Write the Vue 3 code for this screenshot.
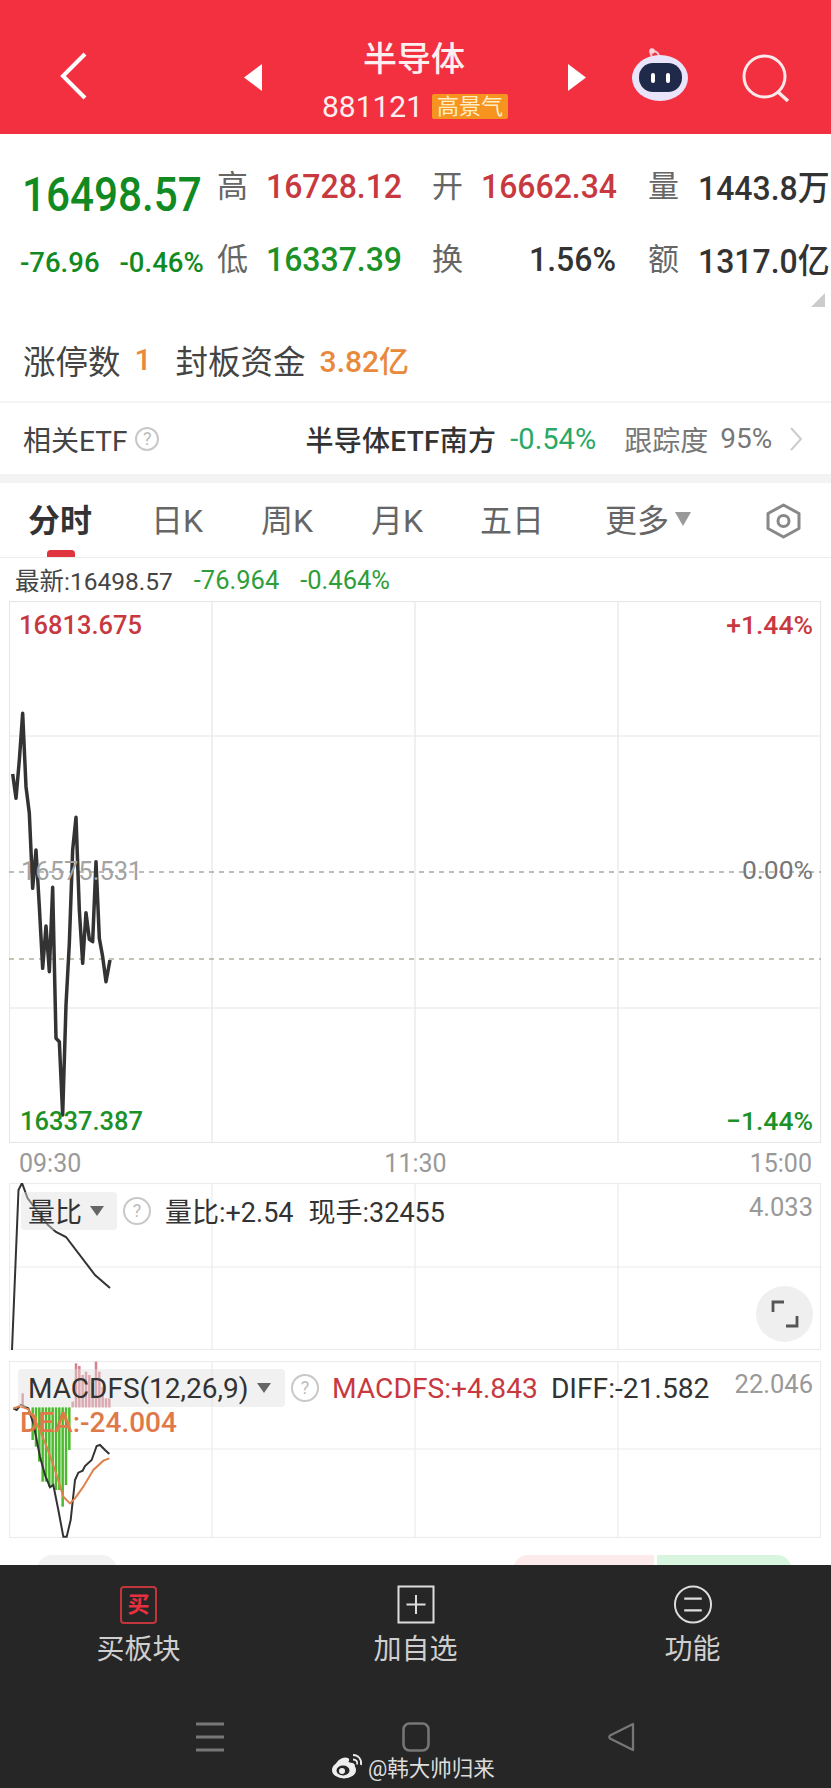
<script setup>
const tabs = [
  { label: '分时', active: true },
  { label: '日K' },
  { label: '周K' },
  { label: '月K' },
  { label: '五日' },
]
const mainLine = [[38,282],[48,355],[58,240],[68,100],[78,320],[88,400],[98,625],[108,510],[118,680],[128,865],[138,738],[148,875],[158,622],[168,1075],[178,1085],[188,1305],[198,975],[208,790],[218,510],[228,412],[238,690],[248,850],[258,698],[268,778],[278,785],[288,545],[298,775],[308,830],[318,905],[330,840]]
  .map(([x, y]) => `${x / 3},${680 + y / 3}`).join(' ')
const z5 = (pts) => pts.map(([x, y]) => `${x / 3},${1350 + y / 3}`).join(' ')
const diff = z5([[40,175],[50,180],[62,165],[85,175],[100,220],[120,320],[135,375],[150,412],[160,405],[175,480],[190,560],[200,560],[212,510],[225,390],[235,368],[248,362],[255,348],[275,330],[290,288],[300,285],[315,300],[328,312]])
const dea = z5([[40,175],[60,168],[85,178],[110,220],[140,290],[165,360],[190,440],[210,460],[225,445],[250,410],[280,360],[310,332],[328,325]])
const greens = [[98,270],[108,290],[118,335],[128,395],[138,395],[148,410],[158,410],[168,420],[178,420],[188,470],[198,405],[208,300]]
  .map(([x, y]) => ({ x: x / 3, y1: 1350 + 172 / 3, y2: 1350 + y / 3 }))
const reds = [[68,130],[218,155],[228,40],[238,48],[248,75],[258,65],[268,75],[278,100],[288,35],[298,65],[308,110],[318,145],[328,145]]
  .map(([x, y]) => ({ x: x / 3, y1: 1350 + 172 / 3, y2: 1350 + y / 3 }))
</script>

<template>
  <div class="app">
    <header class="top">
      <svg class="back" width="27" height="48" viewBox="0 0 27 48"><path d="M25 2 3 24l22 22" fill="none" stroke="#fff" stroke-width="4"/></svg>
      <svg class="tri tri-left" width="18" height="27" viewBox="0 0 18 27"><path d="M18 0v27L0 13.500z" fill="#fff"/></svg>
      <div class="title">
        <div class="name">半导体</div>
        <div class="code"><span>881121</span><span class="tag">高景气</span></div>
      </div>
      <svg class="tri" width="18" height="27" viewBox="0 0 18 27"><path d="M0 0v27l18-13.500z" fill="#fff"/></svg>
      <svg class="robot" width="58" height="54" viewBox="632 50 58 54">
        <path d="M652 58c-2-2-2-5 0-5s6 0 7 5" fill="none" stroke="#f7c4d0" stroke-width="2"/>
        <circle cx="652" cy="53" r="2.800" fill="#fbd5dd"/>
        <ellipse cx="660" cy="80" rx="28" ry="23" fill="#e9e4fa"/>
        <rect x="639" y="65" width="43" height="29" rx="14" fill="#1f2a4a"/>
        <rect x="651" y="75" width="4" height="10" rx="2" fill="#fff"/>
        <rect x="666" y="75" width="4" height="10" rx="2" fill="#fff"/>
      </svg>
      <svg class="search" width="50" height="50" viewBox="742 54 50 50">
        <circle cx="764.500" cy="76.500" r="20.500" fill="none" stroke="#fde8ea" stroke-width="3"/>
        <path d="M778 92l10 9" stroke="#fde8ea" stroke-width="3.500" fill="none"/>
      </svg>
    </header>

    <section class="quote">
      <div class="big green-deep">16498.57</div>
      <div class="lab">高</div><div class="val red">16728.12</div>
      <div class="lab">开</div><div class="val red">16662.34</div>
      <div class="lab">量</div><div class="val dark">1443.8万</div>
      <div class="changes green-deep"><span>-76.96</span><span>-0.46%</span></div>
      <div class="lab">低</div><div class="val green">16337.39</div>
      <div class="lab">换</div><div class="val dark right">1.56%</div>
      <div class="lab">额</div><div class="val dark">1317.0亿</div>
      <svg class="corner" width="14" height="14" viewBox="0 0 14 14"><path d="M14 0v14H0z" fill="#ccc"/></svg>
    </section>

    <section class="limit">
      <span class="limit-label">涨停数</span><span class="limit-val one">1</span>
      <span class="limit-label">封板资金</span><span class="limit-val">3.82亿</span>
    </section>

    <section class="etf">
      <span class="etf-title">相关ETF</span>
      <span class="qmark etf-q">?</span>
      <span class="etf-name">半导体ETF南方</span>
      <span class="etf-pct">-0.54%</span>
      <span class="etf-track">跟踪度</span>
      <span class="etf-num">95%</span>
      <svg class="chev" width="14" height="24" viewBox="0 0 14 24"><path d="M2 1l10 11L2 23" fill="none" stroke="#ccc" stroke-width="2"/></svg>
    </section>

    <div class="band"></div>

    <nav class="tabs">
      <div v-for="t in tabs" :key="t.label" class="tab" :class="{ active: t.active }">{{ t.label }}</div>
      <div class="tab more">更多<span class="caret-big"></span></div>
      <svg class="hex" width="37" height="36" viewBox="0 0 37 36">
        <path d="M18.500 2 34 10.500v15L18.500 34 3 25.500v-15z" fill="none" stroke="#888" stroke-width="3" stroke-linejoin="round"/>
        <circle cx="18.500" cy="18" r="5.500" fill="none" stroke="#888" stroke-width="3"/>
      </svg>
      <span class="indicator"></span>
    </nav>

    <div class="latest">
      <span class="latest-a">最新:16498.57</span>
      <span class="latest-b">-76.964</span>
      <span class="latest-b">-0.464%</span>
    </div>

    <div class="chart">
      <svg class="plot" width="813" height="542" viewBox="9 601 813 542">
        <g stroke="#e6e6e8" stroke-width="1.200" fill="none">
          <rect x="9.500" y="601.500" width="811" height="541"/>
          <path d="M212 601v542M415 601v542M618 601v542M9 736h812M9 1008h812"/>
        </g>
        <path d="M9 872h812" stroke="#a8a8a8" stroke-width="1.300" stroke-dasharray="5 5"/>
        <path d="M9 959h812" stroke="#b3b09c" stroke-width="1.300" stroke-dasharray="5 5"/>
        <polyline :points="mainLine" fill="none" stroke="#333" stroke-width="3.500" stroke-linejoin="round"/>
      </svg>
      <span class="mark tl red">16813.675</span>
      <span class="mark tr red wide">+1.44%</span>
      <span class="mark ml grey">16575.531</span>
      <span class="mark mr grey-dark wide">0.00%</span>
      <span class="mark bl green">16337.387</span>
      <span class="mark br green wide">−1.44%</span>
    </div>

    <div class="axis"><span>09:30</span><span>11:30</span><span>15:00</span></div>

    <div class="panel p2">
      <svg class="plot" width="813" height="167" viewBox="9 1183 813 167">
        <g stroke="#ececee" stroke-width="1.200" fill="none">
          <rect x="9.500" y="1183.500" width="811" height="166"/>
          <path d="M212 1183v167M415 1183v167M618 1183v167M9 1267h812"/>
        </g>
        <polyline points="12,1350 18.500,1190 22,1183 27.500,1198 48,1225 56,1232 66,1237 95,1275 110,1288" fill="none" stroke="#333" stroke-width="2"/>
      </svg>
      <div class="info">
        <span class="picker vol">量比<i class="caret"></i></span>
        <span class="qmark">?</span>
        <span class="info-text first">量比:+2.54</span>
        <span class="info-text">现手:32455</span>
        <span class="info-max">4.033</span>
      </div>
      <div class="expand">
        <svg width="28" height="28" viewBox="0 0 28 28"><path d="M2 12V2h11M26 16v10H15" fill="none" stroke="#555" stroke-width="2.800"/></svg>
      </div>
    </div>

    <div class="panel p3">
      <svg class="plot" width="813" height="177" viewBox="9 1361 813 177">
        <g stroke="#ececee" stroke-width="1.200" fill="none">
          <rect x="9.500" y="1361.500" width="811" height="176"/>
          <path d="M212 1361v177M415 1361v177M618 1361v177M9 1449h812"/>
        </g>
        <line v-for="b in greens" :key="'g' + b.x" :x1="b.x" :x2="b.x" :y1="b.y1" :y2="b.y2" stroke="#4cba2e" stroke-width="2.500"/>
        <line v-for="b in reds" :key="'r' + b.x" :x1="b.x" :x2="b.x" :y1="b.y1" :y2="b.y2" stroke="#d77f8a" stroke-width="2.500"/>
        <polyline :points="diff" fill="none" stroke="#333" stroke-width="2"/>
        <polyline :points="dea" fill="none" stroke="#e0824e" stroke-width="2"/>
      </svg>
      <div class="info macd">
        <span class="picker mac">MACDFS(12,26,9)<i class="caret"></i></span>
        <span class="qmark">?</span>
        <span class="info-text redtxt">MACDFS:+4.843</span>
        <span class="info-text diff-text">DIFF:-21.582</span>
        <span class="info-max">22.046</span>
      </div>
      <div class="dea">DEA:-24.004</div>
    </div>

    <div class="peek">
      <span class="pk pk-grey"></span>
      <span class="pk pk-pink"></span>
      <span class="pk pk-green"></span>
    </div>

    <footer class="bottom">
      <div class="actions">
        <div class="act">
          <div class="buy-box"><span>买</span></div>
          <div class="act-label">买板块</div>
        </div>
        <div class="act">
          <svg width="38" height="39" viewBox="0 0 38 39"><rect x="1.500" y="1.500" width="35" height="36" fill="none" stroke="#ddd" stroke-width="2"/><path d="M19 10v19M9.500 19.500h19" stroke="#ddd" stroke-width="2"/></svg>
          <div class="act-label">加自选</div>
        </div>
        <div class="act">
          <svg width="40" height="40" viewBox="0 0 40 40"><circle cx="20" cy="20" r="18.500" fill="none" stroke="#ddd" stroke-width="2"/><path d="M11 14h18M11 26h18" stroke="#ddd" stroke-width="2.500"/></svg>
          <div class="act-label">功能</div>
        </div>
      </div>
      <div class="sysnav">
        <svg width="30" height="30" viewBox="0 0 30 30"><path d="M1 2h28M1 15h28M1 28h28" stroke="#777" stroke-width="3"/></svg>
        <svg width="28" height="30" viewBox="0 0 28 30"><rect x="1.500" y="1.500" width="25" height="27" rx="6" fill="none" stroke="#777" stroke-width="2.500"/></svg>
        <svg width="28" height="30" viewBox="0 0 28 30"><path d="M26 2v26L3 16.500a2 2 0 0 1 0-3z" fill="none" stroke="#777" stroke-width="2.300" stroke-linejoin="round"/></svg>
      </div>
      <div class="mark-wb">
        <svg width="32" height="25" viewBox="0 0 32 25">
          <ellipse cx="12" cy="16" rx="12" ry="8.500" fill="#eee"/>
          <path d="M3 11C6 5 12 2 16 4c2 1 1 3 0 5 4-1 7 0 7 3" fill="#eee"/>
          <ellipse cx="11" cy="16.500" rx="6.500" ry="5" fill="#262626"/>
          <circle cx="10" cy="17" r="3" fill="#eee"/>
          <path d="M21 1c5 0 9 4 8 10M21 5.500c3 0 5 2 4 5" fill="none" stroke="#eee" stroke-width="1.800"/>
        </svg>
        <span>@韩大帅归来</span>
      </div>
    </footer>
  </div>
</template>

<style>
html, body { margin: 0; background: #fff; }
</style>

<style scoped>
.app {
  width: 831px;
  height: 1788px;
  overflow: hidden;
  display: flex;
  flex-direction: column;
  background: #fff;
  font-family: Roboto, "Noto Sans CJK SC", sans-serif;
  color: #333;
}
.top {
  height: 134px;
  flex: none;
  background: #f2303f;
  display: flex;
  align-items: center;
  padding: 20px 0 0 60px;
  color: #fff;
  box-sizing: border-box;
}
.back { margin-top: -2px; }
.tri { margin-top: 0; }
.tri-left { margin-left: 157px; }
.title {
  width: 306px;
  display: flex;
  flex-direction: column;
  align-items: center;
  margin-top: 3px;
}
.name { font-size: 34px; line-height: 50px; font-weight: 500; color: #fdeef0; margin-left: -2px; }
.code {
  display: flex;
  align-items: center;
  font-size: 30px;
  line-height: 34px;
  margin-top: 6px;
  margin-left: 0;
  color: #fdeef0;
}
.tag {
  margin-left: 9px;
  width: 76px;
  height: 25px;
  background: #f7941f;
  border-radius: 2px;
  font-size: 22px;
  line-height: 25px;
  text-align: center;
  color: #ffeec4;
}
.robot { margin-left: 46px; margin-top: -5px; }
.search { margin-left: 52px; margin-top: 4px; }

.quote {
  position: relative;
  flex: none;
  height: 159px;
  box-sizing: border-box;
  padding: 15px 0 0 20px;
  display: grid;
  grid-template-columns: 197px 49px 166px 49px 167px 50px 133px;
  grid-auto-rows: 73px;
  align-items: center;
  white-space: nowrap;
}
.big {
  font-size: 48px;
  font-weight: 500;
  transform: scaleX(0.88);
  transform-origin: left center;
  margin-left: 2px;
  margin-top: 17px;
}
.lab { font-size: 31px; color: #666; margin-top: -4px; }
.val {
  font-size: 34px;
  font-weight: 500;
  transform: scaleX(0.94);
  transform-origin: left center;
}
.right { text-align: right; padding-right: 32px; transform-origin: 135px center; }
.red { color: #c8393f; }
.green { color: #1b9127; }
.green-deep { color: #118a22; }
.dark { color: #333; }
.changes {
  display: flex;
  gap: 20px;
  font-size: 27.500px;
  font-weight: 500;
  margin-top: 8px;
}
.corner { position: absolute; right: 6px; bottom: -14px; }

.limit {
  flex: none;
  height: 110px;
  box-sizing: border-box;
  padding: 24px 0 0 23px;
  display: flex;
  align-items: center;
  border-bottom: 2px solid #f4f4f4;
  white-space: nowrap;
}
.limit-label { font-size: 32.500px; color: #444; }
.limit-val { font-size: 30px; font-weight: 500; color: #e8893c; margin-left: 14px; }
.limit-val.one { margin-right: 24px; }

.etf {
  flex: none;
  height: 71px;
  box-sizing: border-box;
  padding-left: 23px;
  display: flex;
  align-items: center;
  white-space: nowrap;
  font-size: 28px;
}
.etf-title { color: #444; }
.qmark {
  flex: none;
  width: 24px;
  height: 24px;
  box-sizing: border-box;
  border: 2px solid #c8c8c8;
  border-radius: 50%;
  font-size: 18px;
  line-height: 20px;
  text-align: center;
  color: #bbb;
}
.etf-q { margin-left: 8px; }
.etf-name { margin-left: 146px; font-weight: 500; color: #333; letter-spacing: 0.3px; }
.etf-pct { margin-left: 14px; color: #2aa866; font-size: 29px; }
.etf-track { margin-left: 28px; color: #777; }
.etf-num { margin-left: 12px; color: #777; }
.chev { margin-left: 17px; }

.band { flex: none; height: 9px; background: #f3f3f3; }

.tabs {
  position: relative;
  flex: none;
  height: 75px;
  box-sizing: border-box;
  padding: 0 0 0 28px;
  display: grid;
  grid-template-columns: 123px 110px 110px 109px 125px 160px auto;
  align-items: center;
  border-bottom: 1px solid #ececec;
  font-size: 32px;
  color: #666;
  white-space: nowrap;
}
.tab { margin-top: -5px; }
.tab.active { font-weight: 700; color: #333; }
.more { display: flex; align-items: center; }
.caret-big {
  margin-left: 6px;
  width: 0;
  height: 0;
  border-left: 8px solid transparent;
  border-right: 8px solid transparent;
  border-top: 14px solid #999;
  margin-top: 2px;
}
.hex { margin-top: 2px; }
.indicator {
  position: absolute;
  left: 47px;
  bottom: 0;
  width: 28px;
  height: 7px;
  border-radius: 3.5px 3.5px 0 0;
  background: #e0353f;
}

.latest {
  flex: none;
  height: 43px;
  box-sizing: border-box;
  padding-left: 15px;
  display: flex;
  align-items: center;
  font-size: 25.500px;
  white-space: nowrap;
}
.latest-a { color: #444; font-size: 24.500px; }
.latest-b { color: #2f9e3a; margin-left: 21px; }

.chart {
  position: relative;
  flex: none;
  height: 542px;
  margin-left: 9px;
  width: 813px;
}
.plot { position: absolute; left: 0; top: 0; }
.mark { position: absolute; font-size: 25.500px; line-height: 30px; font-weight: 500; white-space: nowrap; }
.wide { font-size: 26.500px; }
.tl { left: 10px; top: 9px; }
.tr { right: 9px; top: 9px; }
.ml { left: 12px; top: 255px; font-weight: 400; }
.mr { right: 9px; top: 254px; font-weight: 400; }
.bl { left: 11px; top: 505px; }
.br { right: 9px; top: 505px; }
.grey { color: #a3a3a3; }
.grey-dark { color: #777; }

.axis {
  flex: none;
  height: 40px;
  padding: 0 19px;
  display: flex;
  justify-content: space-between;
  align-items: center;
  font-size: 25px;
  color: #999;
}

.panel {
  position: relative;
  flex: none;
  margin-left: 9px;
  width: 813px;
}
.p2 { height: 167px; }
.p3 { height: 177px; margin-top: 11px; }
.info {
  position: relative;
  display: flex;
  align-items: center;
  white-space: nowrap;
  padding: 8px 9px 0 12px;
  font-size: 27px;
  color: #333;
}
.macd { padding-left: 9px; font-size: 28.200px; }
.picker {
  display: flex;
  align-items: center;
  height: 38px;
  box-sizing: border-box;
  border-radius: 4px;
  background: rgba(225, 225, 225, 0.45);
}
.vol { width: 96px; padding-left: 7px; }
.mac { width: 267px; padding-left: 10px; font-size: 28px; }
.caret {
  margin-left: 8px;
  width: 0;
  height: 0;
  border-left: 7px solid transparent;
  border-right: 7px solid transparent;
  border-top: 10px solid #666;
}
.vol + .qmark { width: 28px; height: 28px; margin-left: 6px; line-height: 24px; }
.mac + .qmark { width: 28px; height: 28px; margin-left: 6px; line-height: 24px; }
.info-text { margin-left: 15px; }
.info-text.first { margin-left: 14px; }
.redtxt { color: #c8393f; margin-left: 13px; }
.diff-text { margin-left: 13px; }
.info-max { margin-left: auto; color: #999; font-size: 25.500px; margin-top: -8px; }
.expand {
  position: absolute;
  left: 747px;
  top: 103px;
  width: 57px;
  height: 56px;
  border-radius: 50%;
  background: #efefef;
  display: flex;
  align-items: center;
  justify-content: center;
}
.dea {
  position: absolute;
  left: 11px;
  top: 47px;
  font-size: 28px;
  line-height: 30px;
  font-weight: 500;
  color: #e0794a;
}

.peek {
  flex: none;
  height: 10px;
  margin-top: 17px;
  position: relative;
  display: flex;
  overflow: hidden;
}
.pk { display: block; height: 30px; }
.pk-grey { width: 80px; margin-left: 37px; background: #f2f2f2; border-radius: 15px 15px 0 0; }
.pk-pink { width: 141px; margin-left: 396px; background: #fdeaea; border-radius: 15px 0 0 0; }
.pk-green { width: 135px; margin-left: 3px; background: #d8f5e0; border-radius: 0 15px 0 0; }

.bottom {
  flex: 1;
  background: #262626;
  display: flex;
  flex-direction: column;
  align-items: stretch;
}
.actions {
  height: 110px;
  box-sizing: border-box;
  padding-top: 20px;
  display: grid;
  grid-template-columns: repeat(3, 277px);
  margin-bottom: 47px;
}
.act {
  display: flex;
  flex-direction: column;
  align-items: center;
  height: 90px;
}
.act svg { flex: none; height: 39px; }
.act-label { margin-top: 7px; font-size: 28px; line-height: 38px; color: #cfcfcf; }
.buy-box {
  width: 37px;
  height: 38px;
  box-sizing: border-box;
  border: 2.500px solid #c0363c;
  border-radius: 4px;
  display: flex;
  align-items: center;
  justify-content: center;
  font-size: 22px;
  line-height: 1;
  font-weight: 700;
  color: #e8303f;
  margin-top: 1px;
}
.sysnav {
  height: 30px;
  display: grid;
  grid-template-columns: 30px 28px 28px;
  column-gap: 177px;
  padding-left: 195px;
}
.mark-wb {
  display: flex;
  align-items: center;
  margin: 0 0 0 332px;
  gap: 4px;
  height: 28px;
  color: #ddd;
  font-size: 21.500px;
  white-space: nowrap;
}
</style>
